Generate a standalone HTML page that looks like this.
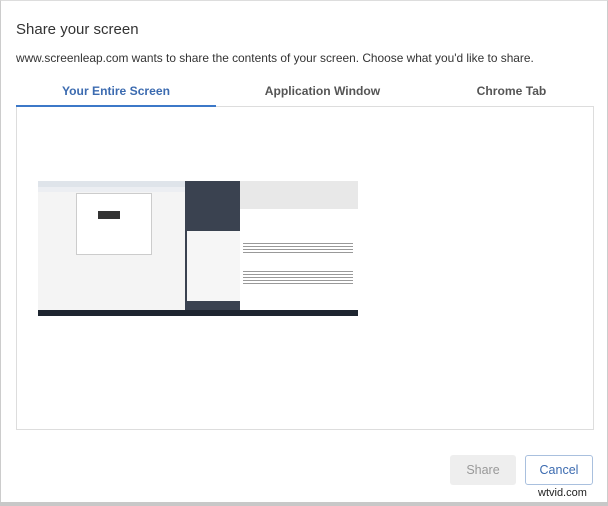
<html><head><style>
body{margin:0;width:608px;height:506px;background:#fff;font-family:"Liberation Sans",sans-serif;position:relative;overflow:hidden}
.frame{position:absolute;left:0;top:0;width:606px;height:501px;border:1px solid #ccc;border-top:1px solid #ddd}
.bot{position:absolute;left:0;top:502px;width:608px;height:4px;background:#c8c8c8}
.t{position:absolute;left:16px;top:21px;font-size:15px;color:#333}
.s{position:absolute;left:16px;top:51px;font-size:11.9px;color:#333}
.tab{position:absolute;top:84px;font-size:12.1px;font-weight:bold;color:#555;text-align:center}
.panel{position:absolute;left:16px;top:107px;width:576px;height:322px;border:1px solid #ddd;border-top:none}
.line{position:absolute;left:16px;top:106px;width:578px;height:1px;background:#ddd}
.ul{position:absolute;left:16px;top:105px;width:200px;height:2px;background:#3c78c8}
.btn{position:absolute;top:455px;height:30px;border-radius:3px;font-size:12.5px;text-align:center;line-height:30px}
</style></head><body>
<div class="frame"></div><div class="bot"></div>
<div class="t">Share your screen</div>
<div class="s">www.screenleap.com wants to share the contents of your screen. Choose what you'd like to share.</div>
<div class="tab" style="left:16px;width:200px;color:#3c6bb0">Your Entire Screen</div>
<div class="tab" style="left:216px;width:213px">Application Window</div>
<div class="tab" style="left:429px;width:165px">Chrome Tab</div>
<div class="line"></div><div class="ul"></div>
<div class="panel"></div>
<div style="position:absolute;left:38px;top:181px;width:320px;height:135px;background:#f4f4f4;overflow:hidden">
 <div style="position:absolute;left:0;top:0;width:147px;height:6px;background:#dfe4ea"></div>
 <div style="position:absolute;left:0;top:6px;width:147px;height:5px;background:#eceef2"></div>
 <div style="position:absolute;left:38px;top:12px;width:74px;height:60px;background:#fff;border:1px solid #ccc"></div>
 <div style="position:absolute;left:60px;top:30px;width:22px;height:8px;background:#333"></div>
 <div style="position:absolute;left:147px;top:0;width:55px;height:135px;background:#3a4250"></div>
 <div style="position:absolute;left:149px;top:50px;width:53px;height:70px;background:#f6f6f6"></div>
 <div style="position:absolute;left:202px;top:0;width:118px;height:28px;background:#e8e8e8"></div>
 <div style="position:absolute;left:202px;top:28px;width:118px;height:102px;background:#fff"></div>
 <div style="position:absolute;left:205px;top:60px;width:110px;height:14px;background:repeating-linear-gradient(#fff 0 2px,#999 2px 3px)"></div>
 <div style="position:absolute;left:205px;top:88px;width:110px;height:16px;background:repeating-linear-gradient(#fff 0 2px,#999 2px 3px)"></div>
 <div style="position:absolute;left:0;top:129px;width:320px;height:6px;background:#1e2530"></div>
</div>
<div class="btn" style="left:450px;width:66px;background:#eee;color:#999">Share</div>
<div class="btn" style="left:525px;width:66px;border:1px solid #a9c0de;height:28px;line-height:28px;color:#3c6bb0">Cancel</div>
<div style="position:absolute;left:538px;top:487px;font-size:11px;color:#222">wtvid.com</div>
</body></html>
